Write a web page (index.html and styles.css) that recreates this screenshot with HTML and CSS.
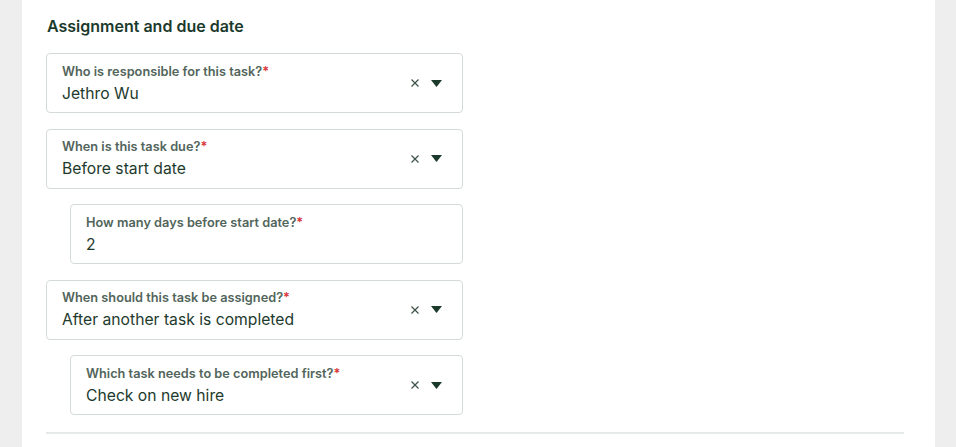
FILE: index.html
```html
<!DOCTYPE html>
<html>
<head>
<meta charset="utf-8">
<link rel="stylesheet" href="styles.css">
</head>
<body>
<div class="page">
  <section class="card">
    <h2 class="title">Assignment and due date</h2>
    <div class="fields">
      <div class="field">
        <div class="field-text">
          <div class="label">Who is responsible for this task?<span class="req">*</span></div>
          <div class="value">Jethro Wu</div>
        </div>
        <div class="controls">
          <svg class="clear" width="10" height="10" viewBox="0 0 10 10"><path d="M1.5 1.5l7 7M8.5 1.5l-7 7" stroke="#3b5146" stroke-width="1.2" fill="none"/></svg>
          <svg class="caret" width="11" height="7" viewBox="0 0 11 7"><path d="M0 0h11L5.5 7z" fill="#1b3a2b"/></svg>
        </div>
      </div>
      <div class="field">
        <div class="field-text">
          <div class="label">When is this task due?<span class="req">*</span></div>
          <div class="value">Before start date</div>
        </div>
        <div class="controls">
          <svg class="clear" width="10" height="10" viewBox="0 0 10 10"><path d="M1.5 1.5l7 7M8.5 1.5l-7 7" stroke="#3b5146" stroke-width="1.2" fill="none"/></svg>
          <svg class="caret" width="11" height="7" viewBox="0 0 11 7"><path d="M0 0h11L5.5 7z" fill="#1b3a2b"/></svg>
        </div>
      </div>
      <div class="field nested">
        <div class="field-text">
          <div class="label">How many days before start date?<span class="req">*</span></div>
          <div class="value">2</div>
        </div>
      </div>
      <div class="field">
        <div class="field-text">
          <div class="label">When should this task be assigned?<span class="req">*</span></div>
          <div class="value">After another task is completed</div>
        </div>
        <div class="controls">
          <svg class="clear" width="10" height="10" viewBox="0 0 10 10"><path d="M1.5 1.5l7 7M8.5 1.5l-7 7" stroke="#3b5146" stroke-width="1.2" fill="none"/></svg>
          <svg class="caret" width="11" height="7" viewBox="0 0 11 7"><path d="M0 0h11L5.5 7z" fill="#1b3a2b"/></svg>
        </div>
      </div>
      <div class="field nested">
        <div class="field-text">
          <div class="label">Which task needs to be completed first?<span class="req">*</span></div>
          <div class="value">Check on new hire</div>
        </div>
        <div class="controls">
          <svg class="clear" width="10" height="10" viewBox="0 0 10 10"><path d="M1.5 1.5l7 7M8.5 1.5l-7 7" stroke="#3b5146" stroke-width="1.2" fill="none"/></svg>
          <svg class="caret" width="11" height="7" viewBox="0 0 11 7"><path d="M0 0h11L5.5 7z" fill="#1b3a2b"/></svg>
        </div>
      </div>
    </div>
    <hr class="divider">
  </section>
</div>
</body>
</html>
```
FILE: styles.css
```css
* { box-sizing: border-box; }
html, body { margin: 0; padding: 0; }
body {
  background: #eeeeee;
  font-family: Inter, "Noto Sans", sans-serif;
  color: #1d3a2c;
  height: 447px;
  overflow: hidden;
}
.page {
  padding-left: 22px;
  width: 935px;
  height: 447px;
}
.card {
  background: #ffffff;
  height: 100%;
  padding: 16px 31px 0 24px;
}
.title {
  margin: 0 0 0 1px;
  font-size: 16px;
  line-height: 20px;
  font-weight: 600;
  color: #1b3a2b;
  letter-spacing: 0;
}
.fields {
  margin-top: 17px;
  display: flex;
  flex-direction: column;
  gap: 15.5px;
  width: 417px;
}
.field {
  height: 60px;
  border: 1px solid #d4dbd7;
  border-radius: 4px;
  display: flex;
  align-items: center;
  padding: 0 20px 0 15px;
}
.field.nested {
  margin-left: 24px;
}
.field-text {
  flex: 1;
  padding-top: 3px;
}
.label {
  font-size: 12.75px;
  line-height: 16px;
  font-weight: 600;
  color: #52655b;
}
.req { color: #d9383a; }
.value {
  font-size: 15.7px;
  line-height: 24px;
  color: #1d3a2c;
  margin-top: 2px;
}
.controls {
  display: flex;
  align-items: center;
  gap: 11px;
  margin-top: 0;
}
.clear { display: block; }
.caret { display: block; }
.divider {
  margin: 17px 0 0 0;
  border: none;
  border-top: 2px solid #e6ebe8;
  width: 858px;
}
```
